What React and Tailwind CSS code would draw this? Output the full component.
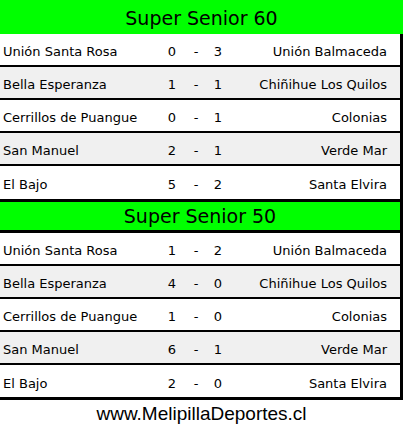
import React from "react";

const s60 = [
  ["Unión Santa Rosa", "0", "3", "Unión Balmaceda"],
  ["Bella Esperanza", "1", "1", "Chiñihue Los Quilos"],
  ["Cerrillos de Puangue", "0", "1", "Colonias"],
  ["San Manuel", "2", "1", "Verde Mar"],
  ["El Bajo", "5", "2", "Santa Elvira"],
];
const s50 = [
  ["Unión Santa Rosa", "1", "2", "Unión Balmaceda"],
  ["Bella Esperanza", "4", "0", "Chiñihue Los Quilos"],
  ["Cerrillos de Puangue", "1", "0", "Colonias"],
  ["San Manuel", "6", "1", "Verde Mar"],
  ["El Bajo", "2", "0", "Santa Elvira"],
];

function Row({ r, i, last, lastH }) {
  const bg = i % 2 === 1 ? "bg-[#f0f0f0]" : "bg-white";
  const cls = last
    ? `${lastH} border-b-[3px]`
    : "h-[33px] border-b-2";
  return (
    <div className={`flex items-center border-black ${cls} ${bg} pt-[5px] text-[13px] text-black`}>
      <div className="w-[160px] pl-[3px] whitespace-nowrap">{r[0]}</div>
      <div className="w-[24px] text-center">{r[1]}</div>
      <div className="w-[24px] text-center">-</div>
      <div className="w-[20px] text-center">{r[2]}</div>
      <div className="flex-1 text-right pr-[13px] whitespace-nowrap">{r[3]}</div>
    </div>
  );
}

export default function App() {
  return (
    <div
      className="w-[403px] h-[432px] bg-white overflow-hidden"
      style={{ fontFamily: '"DejaVu Sans", Verdana, sans-serif' }}
    >
      <div className="h-[34px] bg-[#00ff00] flex items-center justify-center pt-[2px] text-[19px] text-black">
        Super Senior 60
      </div>
      <div className="border-r-[3px] border-black">
        {s60.map((r, i) => (
          <Row key={i} r={r} i={i} last={i === 4} lastH="h-[36px]" />
        ))}
        <div className="h-[31px] bg-[#00ff00] border-b-[3px] border-black flex items-center justify-center pt-[1px] text-[19px] text-black">
          Super Senior 50
        </div>
        {s50.map((r, i) => (
          <Row key={i} r={r} i={i} last={i === 4} lastH="h-[35px]" />
        ))}
      </div>
      <div
        className="h-[32px] flex justify-center pt-[2px] text-[19px] leading-[24px] text-black"
        style={{ fontFamily: '"Liberation Sans", Arial, sans-serif' }}
      >
        www.MelipillaDeportes.cl
      </div>
    </div>
  );
}
